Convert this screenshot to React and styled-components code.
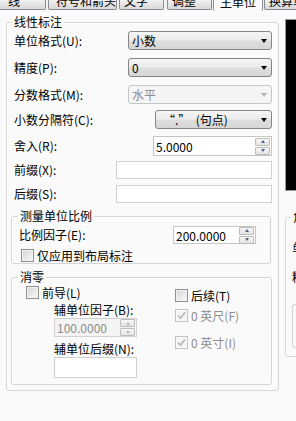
import React from 'react';
import styled, { createGlobalStyle } from 'styled-components';

const GlobalStyle = createGlobalStyle`
  html, body {
    margin: 0;
    padding: 0;
  }
  body {
    background: #fafafa;
    font-family: "Noto Sans CJK SC", "DejaVu Sans", sans-serif;
    font-size: 12px;
    color: #000;
  }
`;

const Dialog = styled.div`
  width: 296px;
  height: 421px;
  overflow: hidden;
  display: flex;
  flex-direction: column;
  background: #fafafa;
`;

const TabBar = styled.div`
  display: flex;
  flex: none;
  height: 10px;
  background: #f2f2f2;
`;

const Tab = styled.div`
  flex: none;
  box-sizing: border-box;
  width: ${p => p.$w}px;
  margin-left: ${p => p.$ml}px;
  height: ${p => (p.$active ? 11 : 10)}px;
  overflow: hidden;
  display: flex;
  align-items: flex-end;
  padding-left: ${p => p.$pl}px;
  border: 1px solid #898c95;
  border-top: none;
  border-bottom: ${p => (p.$active ? 'none' : '1px solid #898c95')};
  border-radius: 0 0 2px 2px;
  background: ${p => (p.$active ? '#fafafa' : 'linear-gradient(#f2f2f2, #e3e3e3 50%, #d9d9d9)')};
  position: relative;
  z-index: ${p => (p.$active ? 1 : 0)};
`;

const TabText = styled.span`
  line-height: 14px;
  font-size: 12px;
  margin-bottom: ${p => (p.$active ? 2 : 1)}px;
  white-space: nowrap;
`;

const Body = styled.div`
  display: flex;
  flex: 1;
  padding-top: 5px;
`;

const LeftCol = styled.div`
  flex: none;
  width: 273px;
  margin-left: 6px;
`;

const RightCol = styled.div`
  flex: none;
  width: 120px;
  margin-left: 6px;
  display: flex;
  flex-direction: column;
`;

const Group = styled.fieldset`
  margin: ${p => p.$mt || 0}px ${p => p.$mr || 0}px 0 0;
  padding: ${p => p.$pad};
  border: 1px solid #d5d5d5;
  border-radius: 3px;
  min-width: 0;
  box-shadow: inset 1px 1px 0 #fff;
`;

const Legend = styled.legend`
  padding: 0 2px;
  margin-left: ${p => p.$ml || 0}px;
  line-height: 14px;
  font-size: 12px;
  white-space: nowrap;
`;

const Row = styled.div`
  display: flex;
  align-items: center;
  height: ${p => p.$h}px;
  margin-top: ${p => p.$mt}px;
  padding-left: ${p => p.$pl || 0}px;
  padding-right: ${p => p.$pr || 0}px;
`;

const Label = styled.span`
  white-space: nowrap;
  line-height: 14px;
  color: ${p => (p.$disabled ? '#8d8d8d' : '#000')};
`;

const Select = styled.div`
  margin-left: auto;
  box-sizing: border-box;
  width: ${p => p.$w}px;
  height: 19px;
  display: flex;
  align-items: center;
  padding: 0 4px 0 ${p => p.$pl || 3}px;
  border: 1px solid ${p => (p.$disabled ? '#c6c6c6' : '#858585')};
  border-radius: 3px;
  background: ${p =>
    p.$disabled
      ? '#f5f5f5'
      : 'linear-gradient(#f4f4f4, #ececec 48%, #dedede 52%, #d6d6d6)'};
  color: ${p => (p.$disabled ? '#8d8d8d' : '#000')};
  white-space: pre;
`;

const Arrow = styled.span`
  margin-left: auto;
  width: 0;
  height: 0;
  border-left: 3.5px solid transparent;
  border-right: 3.5px solid transparent;
  border-top: 4px solid ${p => (p.$disabled ? '#b3b3b3' : '#000')};
`;

const SpinBox = styled.div`
  margin-left: ${p => (p.$left ? 0 : 'auto')};
  box-sizing: border-box;
  width: ${p => p.$w}px;
  height: ${p => p.$h}px;
  display: flex;
  align-items: center;
  padding: 0 1px 0 2px;
  border: 1px solid ${p => (p.$disabled ? '#d2d2d2' : '#c5c5c5')};
  background: ${p => (p.$disabled ? '#f4f4f4' : '#fff')};
  color: ${p => (p.$disabled ? '#8d8d8d' : '#000')};
`;

const SpinButtons = styled.div`
  margin-left: auto;
  display: flex;
  flex-direction: column;
  gap: 1px;
`;

const SpinButton = styled.span`
  box-sizing: border-box;
  width: 15px;
  height: 8px;
  border: 1px solid #bdbdbd;
  border-radius: 1px;
  background: linear-gradient(#f7f7f7, #e3e3e3);
  display: flex;
  align-items: center;
  justify-content: center;
  &::after {
    content: '';
    border-left: 2.5px solid transparent;
    border-right: 2.5px solid transparent;
    ${p =>
      p.$down
        ? `border-top: 3px solid ${p.$disabled ? '#b9b9b9' : '#50637f'};`
        : `border-bottom: 3px solid ${p.$disabled ? '#b9b9b9' : '#50637f'};`}
  }
`;

const TextBox = styled.div`
  margin-left: ${p => (p.$left ? 0 : 'auto')};
  box-sizing: border-box;
  width: ${p => p.$w}px;
  height: ${p => p.$h}px;
  border: 1px solid #d0d0d0;
  background: #fff;
`;

const CheckRow = styled.label`
  display: flex;
  align-items: center;
  gap: 3px;
  height: 14px;
  margin-top: ${p => p.$mt || 0}px;
  margin-left: ${p => p.$ml || 0}px;
  color: ${p => (p.$disabled ? '#8d8d8d' : '#000')};
  white-space: pre;
`;

const Box = styled.span`
  flex: none;
  box-sizing: border-box;
  width: 13px;
  height: 13px;
  border: 1px solid ${p => (p.$disabled ? '#c2c2c2' : '#8e8f8f')};
  background: ${p =>
    p.$disabled ? '#f4f4f4' : 'linear-gradient(135deg, #d3d3d3, #efefef 70%, #f8f8f8)'};
  box-shadow: inset 0 0 0 1px ${p => (p.$disabled ? '#fafafa' : '#f4f4f4')};
  display: flex;
  align-items: center;
  justify-content: center;
`;

const ZeroGrid = styled.div`
  display: grid;
  grid-template-columns: 149px 1fr;
  padding-left: 2px;
`;

const Column = styled.div`
  display: flex;
  flex-direction: column;
`;

const SubBlock = styled.div`
  display: flex;
  flex-direction: column;
  padding-left: 28px;
`;

const SubLabel = styled.span`
  line-height: 14px;
  margin-top: ${p => p.$mt}px;
  white-space: nowrap;
`;

const Spacer = styled.div`
  height: ${p => p.$h}px;
`;

const Preview = styled.div`
  margin-top: 4px;
  height: 170px;
  border: 1px solid #9a9a9a;
  border-right: none;
  background: #000;
`;

const SideLine = styled.div`
  line-height: 14px;
  margin-top: ${p => p.$mt}px;
  white-space: nowrap;
`;

const InnerFrame = styled.div`
  margin-top: 20px;
  height: 42px;
  border: 1px solid #d5d5d5;
  border-right: none;
  border-radius: 3px 0 0 3px;
`;

const tabs = [
  { text: '线', w: 48, ml: -2, pl: 9 },
  { text: '符号和箭头', w: 69, ml: 2, pl: 7 },
  { text: '文字', w: 45, ml: 2, pl: 4 },
  { text: '调整', w: 45, ml: 3, pl: 4 },
  { text: '主单位', w: 50, ml: 1, pl: 6, active: true },
  { text: '换算单位', w: 60, ml: 1, pl: 4 },
];

const Check = ({ disabled, checked }) => (
  <Box $disabled={disabled}>
    {checked && (
      <svg width="9" height="9" viewBox="0 0 9 9">
        <path d="M1 4.5 L3.5 7 L8 1.5" fill="none" stroke="#b4b4b4" strokeWidth="1.6" />
      </svg>
    )}
  </Box>
);

const Spin = ({ value, w, h, left, disabled }) => (
  <SpinBox $w={w} $h={h} $left={left} $disabled={disabled}>
    {value}
    <SpinButtons>
      <SpinButton $disabled={disabled} />
      <SpinButton $down $disabled={disabled} />
    </SpinButtons>
  </SpinBox>
);

const App = () => {
  return (
    <>
      <GlobalStyle />
      <Dialog>
        <TabBar>
          {tabs.map(t => (
            <Tab key={t.text} $w={t.w} $ml={t.ml} $pl={t.pl} $active={t.active}>
              <TabText $active={t.active}>{t.text}</TabText>
            </Tab>
          ))}
        </TabBar>
        <Body>
          <LeftCol>
            <Group $pad="2px 6px 5px 4px">
              <Legend $ml={1}>线性标注</Legend>
              <Row $h={19} $mt={0} $pl={3}>
                <Label>单位格式(U):</Label>
                <Select $w={144}>
                  小数
                  <Arrow />
                </Select>
              </Row>
              <Row $h={19} $mt={8} $pl={3}>
                <Label>精度(P):</Label>
                <Select $w={144}>
                  0
                  <Arrow />
                </Select>
              </Row>
              <Row $h={19} $mt={8} $pl={3}>
                <Label>分数格式(M):</Label>
                <Select $w={144} $disabled>
                  水平
                  <Arrow $disabled />
                </Select>
              </Row>
              <Row $h={19} $mt={6} $pl={3}>
                <Label>小数分隔符(C):</Label>
                <Select $w={117} $pl={7}>
                  {'“.”  (句点)'}
                  <Arrow />
                </Select>
              </Row>
              <Row $h={20} $mt={7} $pl={3}>
                <Label>舍入(R):</Label>
                <Spin value="5.0000" w={119} h={20} />
              </Row>
              <Row $h={18} $mt={5} $pl={3}>
                <Label>前缀(X):</Label>
                <TextBox $w={156} $h={18} />
              </Row>
              <Row $h={18} $mt={6} $pl={3}>
                <Label>后缀(S):</Label>
                <TextBox $w={156} $h={18} />
              </Row>

              <Group $mt={6} $mr={1} $pad="3px 14px 1px 7px">
                <Legend $ml={-1}>测量单位比例</Legend>
                <Row $h={18} $mt={0}>
                  <Label>比例因子(E):</Label>
                  <Spin value="200.0000" w={83} h={18} />
                </Row>
                <CheckRow $mt={4} $ml={2}>
                  <Check />
                  仅应用到布局标注
                </CheckRow>
              </Group>

              <Group $mt={6} $pad="1px 6px 6px 12px">
                <Legend $ml={-6}>消零</Legend>
                <ZeroGrid>
                  <Column>
                    <CheckRow>
                      <Check />
                      前导(L)
                    </CheckRow>
                    <SubBlock>
                      <SubLabel $mt={4}>辅单位因子(B):</SubLabel>
                      <Spacer $h={1} />
                      <Spin value="100.0000" w={83} h={19} left disabled />
                      <SubLabel $mt={5}>辅单位后缀(N):</SubLabel>
                      <Spacer $h={1} />
                      <TextBox $w={83} $h={21} $left />
                    </SubBlock>
                  </Column>
                  <Column>
                    <CheckRow $mt={3}>
                      <Check />
                      后续(T)
                    </CheckRow>
                    <CheckRow $mt={6} $disabled>
                      <Check disabled checked />
                      0 英尺(F)
                    </CheckRow>
                    <CheckRow $mt={13} $disabled>
                      <Check disabled checked />
                      0 英寸(I)
                    </CheckRow>
                  </Column>
                </ZeroGrid>
              </Group>
            </Group>
          </LeftCol>

          <RightCol>
            <Preview />
            <Group $mt={19} $pad="0 0 8px 6px">
              <Legend $ml={-1}>角度标注</Legend>
              <SideLine $mt={17}>单位格式(A):</SideLine>
              <SideLine $mt={15}>精度(O):</SideLine>
              <InnerFrame />
            </Group>
          </RightCol>
        </Body>
      </Dialog>
    </>
  );
};

export default App;
